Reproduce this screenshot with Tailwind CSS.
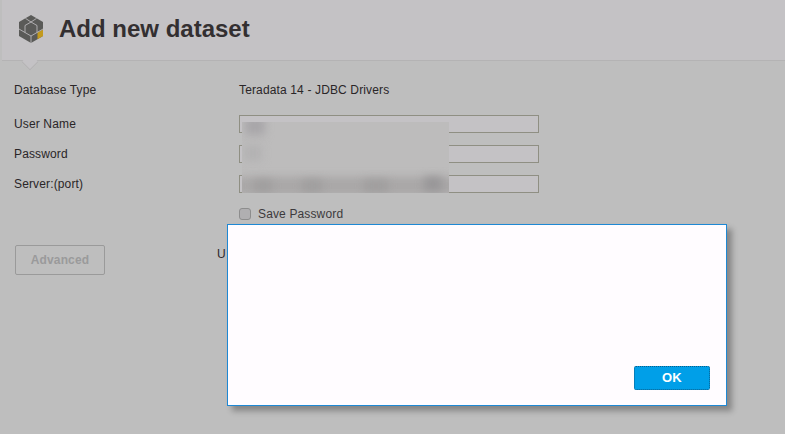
<!DOCTYPE html>
<html lang="en">
<head>
    <meta charset="UTF-8">
    <title>Add new dataset</title>
    <script src="https://cdn.jsdelivr.net/npm/@tailwindcss/browser@4"></script>
</head>
<body>
    <div class="relative w-[785px] h-[434px] overflow-hidden bg-[#bebebe] font-['Liberation_Sans',Arial,sans-serif] text-[12px] tracking-[0.14px] text-[#2a2628]">
        <!-- header -->
        <div class="relative h-[61px] ml-[2px] bg-[#c4c2c5] border-b border-[#b4b3b4] flex items-center pl-[17px] pb-[3px]">
            <svg class="w-[24px] h-[28px]" viewBox="0 0 24 28">
                <path d="M12 0 L24 7 L24 21 L12 28 L0 21 L0 7 Z" fill="#5a5a58"/>
                <path d="M18.5 17.5 L24 14.4 L24 21 L18.5 24.2 Z" fill="#c39a1e"/>
                <path d="M6 10.5 L12 7 L18 10.5 L18 17.5 L12 21 L6 17.5 Z M6.5 3.4 L12 7 L17.5 3.4 M6 17.5 L0 14 M18 17.5 L24 14 M12 21 L12 28" fill="none" stroke="#c4c2c5" stroke-width="0.8"/>
            </svg>
            <h1 class="ml-[16px] text-[24px] font-bold leading-none tracking-normal text-[#332f31]">Add new dataset</h1>
            <div class="absolute left-[22px] top-[56px] w-[12px] h-[12px] rotate-45 bg-[#c4c2c5] border-r border-b border-[#b4b3b4]"></div>
        </div>

        <!-- form -->
        <div class="pl-[14px] pt-[20px]">
            <div class="grid grid-cols-[225px_300px] items-center h-[18px]">
                <span>Database Type</span>
                <span>Teradata 14 - JDBC Drivers</span>
            </div>
            <div class="grid grid-cols-[225px_300px] items-center h-[18px] mt-[16px]">
                <span>User Name</span>
                <div class="h-[18px] border border-[#8f8f83] bg-[#c4c2c5]"></div>
            </div>
            <div class="grid grid-cols-[225px_300px] items-center h-[18px] mt-[12px]">
                <span>Password</span>
                <div class="h-[18px] border border-[#8f8f83] bg-[#c4c2c5]"></div>
            </div>
            <div class="grid grid-cols-[225px_300px] items-center h-[18px] mt-[12px]">
                <span>Server:(port)</span>
                <div class="h-[18px] border border-[#8f8f83] bg-[#c4c2c5]"></div>
            </div>
            <div class="flex items-center ml-[225px] mt-[12px] h-[18px] text-[#3c3a3c]">
                <div class="w-[12px] h-[12px] rounded-[3px] border border-[#8d8d8d] bg-[#b0afb1]"></div>
                <span class="ml-[7px]">Save Password</span>
            </div>
            <div class="flex items-start mt-[22px] ml-[1px]">
                <div class="w-[90px] h-[30px] rounded-[2px] border border-[#9a9a9a] flex items-center justify-center font-bold text-[#9a9a9b]">Advanced</div>
                <span class="ml-[112px] leading-[18px]">U</span>
            </div>
        </div>

        <!-- blurred out values -->
        <div class="absolute left-[242px] top-[122px] w-[207px] h-[71px] overflow-hidden bg-[#bdbcbc]">
            <div class="absolute left-[3px] top-[-5px] w-[20px] h-[18px] bg-[#a8a6a9] blur-[4px]"></div>
            <div class="absolute left-[2px] top-[23px] w-[18px] h-[16px] bg-[#b3b2b3] blur-[4px]"></div>
            <div class="absolute left-[-6px] top-[55px] w-[220px] h-[18px] bg-[#a9a7a7] blur-[4px]"></div>
            <div class="absolute left-[12px] top-[58px] w-[18px] h-[12px] bg-[#a09e9e] blur-[4px]"></div>
            <div class="absolute left-[60px] top-[58px] w-[20px] h-[12px] bg-[#a09e9e] blur-[4px]"></div>
            <div class="absolute left-[122px] top-[58px] w-[24px] h-[12px] bg-[#a09e9e] blur-[4px]"></div>
            <div class="absolute left-[182px] top-[55px] w-[18px] h-[14px] bg-[#989698] blur-[4px]"></div>
        </div>

        <!-- alert dialog -->
        <div class="absolute left-[227px] top-[224px] w-[500px] h-[182px] bg-[#fffcff] border border-[#1e88d4] shadow-[5px_5px_6px_rgba(0,0,0,0.3)]">
            <button class="absolute left-[406px] top-[141px] w-[76px] h-[24px] rounded-[2px] bg-[#009fe8] border border-dotted border-[#0a5f8c] text-white text-[13px] font-bold">OK</button>
        </div>
    </div>
</body>
</html>
